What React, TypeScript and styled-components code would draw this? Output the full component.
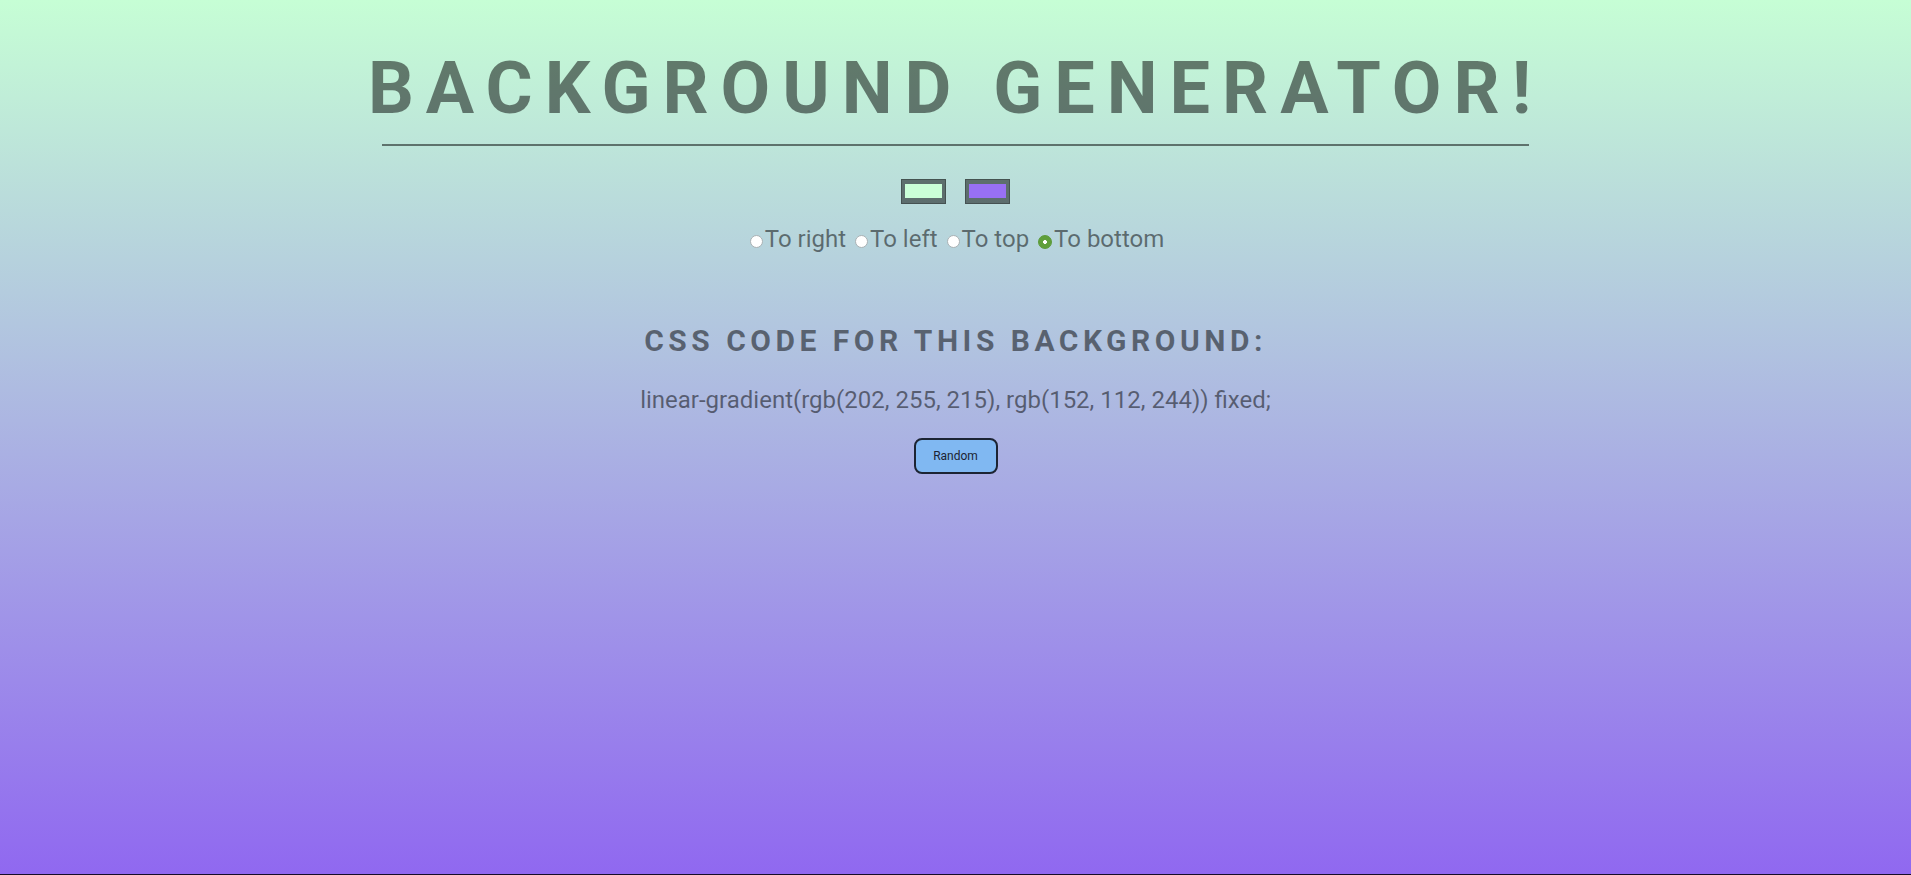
import React, { useState } from "react";
import styled, { createGlobalStyle } from "styled-components";

const GlobalStyle = createGlobalStyle`
  html, body {
    margin: 0;
    padding: 0;
  }
  body {
    font-family: Roboto, "Liberation Sans", sans-serif;
  }
`;

const Page = styled.div<{ $bg: string }>`
  box-sizing: border-box;
  height: 100vh;
  background: ${(p) => p.$bg};
  border-bottom: 1px solid #150d28;
  display: flex;
  flex-direction: column;
  align-items: center;
  text-align: center;
  color: rgba(0, 0, 0, 0.5);
`;

const Title = styled.h1`
  margin: 46px 0 0;
  font-family: Roboto, "Liberation Sans", sans-serif;
  font-weight: 700;
  font-size: 72px;
  line-height: normal;
  letter-spacing: 12px;
  color: rgba(0, 0, 0, 0.5);
`;

const Rule = styled.hr`
  box-sizing: border-box;
  width: 60%;
  margin: 13px 0 0;
  border: none;
  border-top: 2px solid rgba(0, 0, 0, 0.5);
  height: 0;
`;

const Swatches = styled.div`
  display: flex;
  gap: 19px;
  margin-top: 33px;
`;

const ColorInput = styled.input`
  -webkit-appearance: none;
  appearance: none;
  box-sizing: border-box;
  width: 45px;
  height: 25px;
  margin: 0;
  padding: 4px 3px 5px 3px;
  border: 1px solid rgba(0, 0, 0, 0.25);
  background: rgba(0, 0, 0, 0.5);
  cursor: pointer;
  &::-webkit-color-swatch-wrapper {
    padding: 0;
  }
  &::-webkit-color-swatch {
    border: none;
  }
`;

const RadioRow = styled.div`
  margin-top: 21px;
  font-size: 24px;
  line-height: normal;
  color: rgba(0, 0, 0, 0.5);
  white-space: nowrap;
`;

const Radio = styled.input`
  -webkit-appearance: none;
  appearance: none;
  box-sizing: border-box;
  display: inline-block;
  width: 13px;
  height: 13px;
  margin: 0 2px 0 3px;
  border-radius: 50%;
  border: 1px solid #a9b1b4;
  background: #ffffff;
  vertical-align: -1px;
  cursor: pointer;
  &:checked {
    width: 14px;
    height: 14px;
    border: 1px solid #5a9936;
    background: radial-gradient(circle, #ffffff 0 1.6px, #5f9f3b 2.2px);
    vertical-align: -1.5px;
  }
`;

const RadioLabel = styled.label`
  cursor: pointer;
`;

const Heading = styled.h3`
  margin: 70px 0 0;
  font-size: 30px;
  font-weight: 700;
  line-height: normal;
  letter-spacing: 4.5px;
  color: rgba(0, 0, 0, 0.5);
`;

const Code = styled.p`
  margin: 28px 0 0;
  font-size: 24px;
  line-height: normal;
  color: rgba(0, 0, 0, 0.5);
`;

const RandomButton = styled.button`
  box-sizing: border-box;
  margin-top: 24px;
  width: 84px;
  height: 36px;
  padding: 0;
  border: 2px solid #1c2433;
  border-radius: 8px;
  background: #80b8f2;
  color: #1c2433;
  font-family: Roboto, "Liberation Sans", sans-serif;
  font-size: 12px;
  cursor: pointer;
`;

type Dir = "right" | "left" | "top" | "bottom";

const dirs: { id: Dir; label: string }[] = [
  { id: "right", label: "To right" },
  { id: "left", label: "To left" },
  { id: "top", label: "To top" },
  { id: "bottom", label: "To bottom" },
];

function hexToRgb(hex: string) {
  const n = parseInt(hex.slice(1), 16);
  return `rgb(${(n >> 16) & 255}, ${(n >> 8) & 255}, ${n & 255})`;
}

function shade(hex: string, kr: number, kg: number, kb: number) {
  const n = parseInt(hex.slice(1), 16);
  const f = (v: number, k: number) => Math.max(0, Math.min(255, Math.round(v * k)));
  return `rgb(${f((n >> 16) & 255, kr)}, ${f((n >> 8) & 255, kg)}, ${f(n & 255, kb)})`;
}

export default function App() {
  const [c1, setC1] = useState("#caffd7");
  const [c2, setC2] = useState("#9870f4");
  const [dir, setDir] = useState<Dir>("bottom");

  const prefix = dir === "bottom" ? "" : `to ${dir}, `;
  const gradient = `linear-gradient(${prefix}${hexToRgb(c1)}, ${hexToRgb(c2)}) fixed`;
  const pageBg = `linear-gradient(${prefix}${shade(c1, 0.98, 0.995, 0.99)}, ${shade(
    c2,
    0.945,
    0.93,
    0.985
  )}) fixed`;

  const randomize = () => {
    const r = () =>
      "#" +
      Math.floor(Math.random() * 0xffffff)
        .toString(16)
        .padStart(6, "0");
    setC1(r());
    setC2(r());
  };

  return (
    <>
      <GlobalStyle />
      <Page $bg={pageBg}>
        <Title>BACKGROUND GENERATOR!</Title>
        <Rule />
        <Swatches>
          <ColorInput type="color" value={c1} onChange={(e) => setC1(e.target.value)} />
          <ColorInput type="color" value={c2} onChange={(e) => setC2(e.target.value)} />
        </Swatches>
        <RadioRow>
          {dirs.map((d, i) => (
            <React.Fragment key={d.id}>
              {i > 0 ? " " : null}
              <Radio
                type="radio"
                name="direction"
                id={d.id}
                checked={dir === d.id}
                onChange={() => setDir(d.id)}
              />
              <RadioLabel htmlFor={d.id}>{d.label}</RadioLabel>
            </React.Fragment>
          ))}
        </RadioRow>
        <Heading>CSS CODE FOR THIS BACKGROUND:</Heading>
        <Code>{gradient};</Code>
        <RandomButton onClick={randomize}>Random</RandomButton>
      </Page>
    </>
  );
}
